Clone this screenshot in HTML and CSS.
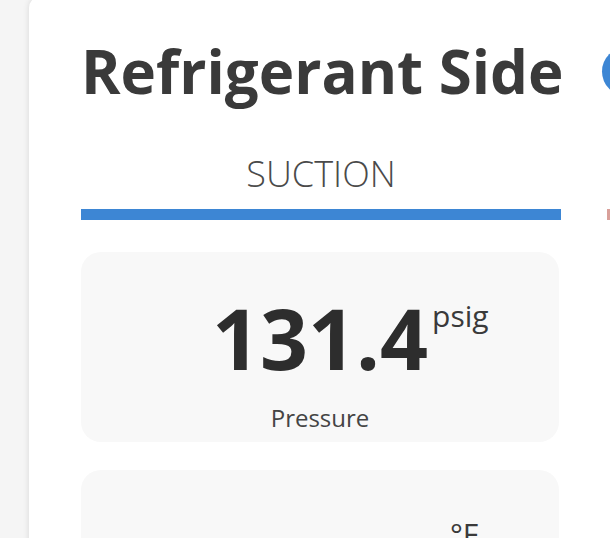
FILE: index.html
```html
<!DOCTYPE html>
<html lang="en">
<head>
  <meta charset="UTF-8">
  <meta name="viewport" content="width=device-width, initial-scale=1.0">
  <title>Refrigerant Side</title>
  <link rel="stylesheet" href="styles.css">
</head>
<body>
  <div id="panel">
    <div class="panel-head">
      <h2>Refrigerant Side</h2>
      <span class="info-dot"></span>
    </div>
    <div class="sides">
      <div class="side">
        <div class="side-title">Suction</div>
        <div class="side-bar suction"></div>
        <div class="stat">
          <div class="stat-value">131.4<span class="unit">psig</span></div>
          <div class="stat-label">Pressure</div>
        </div>
        <div class="stat">
          <div class="stat-value">&mdash;&mdash;&mdash;<span class="unit">&deg;F</span></div>
          <div class="stat-label">Temperature</div>
        </div>
      </div>
      <div class="side">
        <div class="side-title">Discharge</div>
        <div class="side-bar discharge"></div>
      </div>
    </div>
  </div>
</body>
</html>
```
FILE: styles.css
```css
body {
  font-family: "Open Sans", "Noto Sans", sans-serif;
  margin: 0;
  padding: 0 0 0 29px;
  background-color: #f5f5f5;
  overflow: hidden;
  height: 538px;
}
#panel {
  width: 1100px;
  margin-top: -4px;
  background-color: white;
  border-radius: 12px;
  box-shadow: 0 0 6px rgba(0, 0, 0, 0.12);
  padding: 39px 0 0 52px;
  min-height: 700px;
}
.panel-head {
  display: flex;
  align-items: center;
  gap: 38px;
}
.panel-head h2 {
  margin: 0;
  font-size: 60px;
  line-height: 72px;
  font-weight: 700;
  color: #3a3a3a;
}
.info-dot {
  width: 49px;
  height: 49px;
  border-radius: 50%;
  background-color: #3d86d4;
}
.sides {
  display: grid;
  grid-template-columns: 480px 480px;
  gap: 46px;
  margin-top: 45px;
}
.side-title {
  text-align: center;
  text-transform: uppercase;
  font-size: 36px;
  font-weight: 300;
  line-height: 43px;
  color: #4a4a4a;
}
.side-bar {
  height: 11px;
  margin-top: 14px;
}
.side-bar.suction {
  background-color: #3d86d4;
}
.side-bar.discharge {
  background-color: #d9a09a;
}
.stat {
  background-color: #f8f8f8;
  border-radius: 20px;
  margin: 32px 2px 28px 0;
  padding: 44px 0 10px;
  text-align: center;
}
.stat + .stat {
  margin-top: 0;
}
.stat-value {
  position: relative;
  display: inline-block;
  font-size: 84px;
  font-weight: 700;
  line-height: 84px;
  color: #2d2d2d;
}
.unit {
  position: absolute;
  left: 100%;
  top: 5px;
  margin-left: 4px;
  font-size: 30px;
  font-weight: 400;
  line-height: 30px;
  color: #3a3a3a;
}
.stat-label {
  margin-top: 23px;
  font-size: 24px;
  line-height: 29px;
  color: #444;
}
```
